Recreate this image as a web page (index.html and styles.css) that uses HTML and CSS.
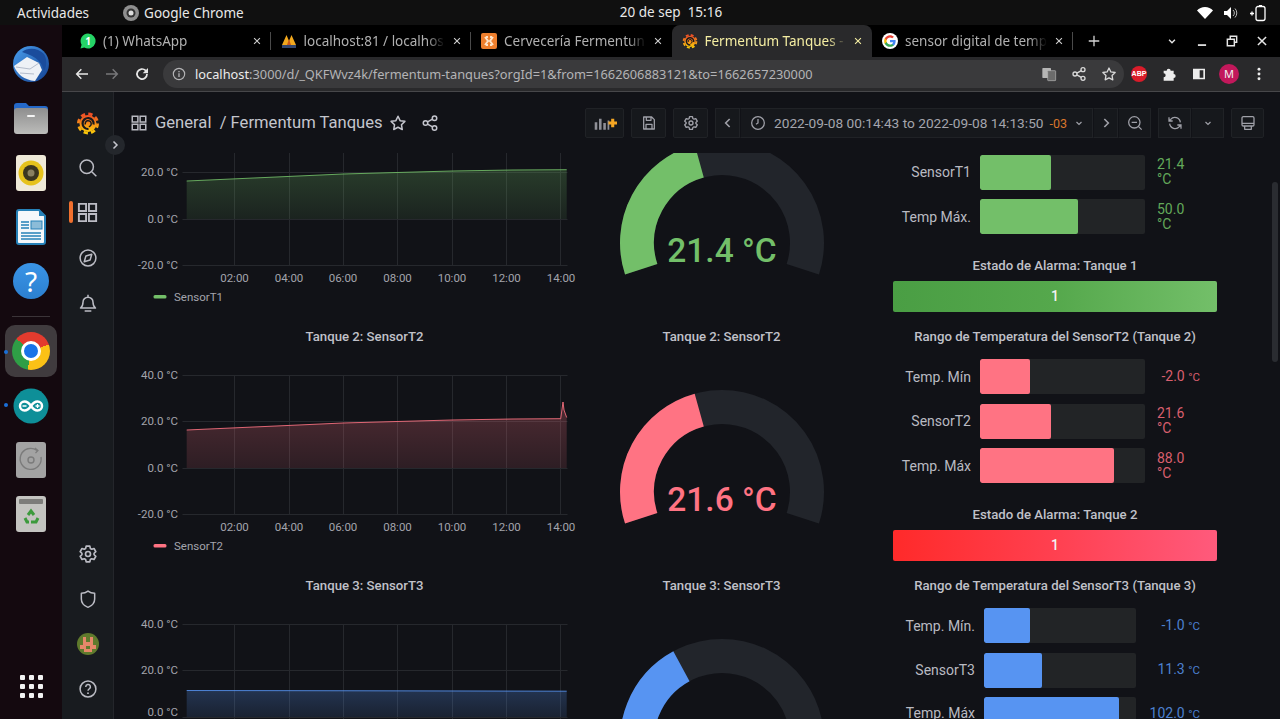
FILE: index.html
```html
<!DOCTYPE html>
<html lang="es">
<head>
  <meta charset="UTF-8" />
  <title>Fermentum Tanques - Grafana</title>
  <link rel="stylesheet" href="styles.css">
</head>
<body>

  <svg class="sprite" xmlns="http://www.w3.org/2000/svg">
    <defs>
      <linearGradient id="grafanaGrad" x1="0" y1="1" x2="0" y2="0">
        <stop offset="0" stop-color="#fbca0a"/>
        <stop offset="1" stop-color="#ef4d27"/>
      </linearGradient>
      <symbol id="grafana" viewBox="0 0 24 24">
        <circle cx="12" cy="12.500" r="8.500" fill="url(#grafanaGrad)"/>
        <circle cx="12" cy="12.500" r="9.600" fill="none" stroke="url(#grafanaGrad)" stroke-width="2.800" stroke-dasharray="4.300 3.240" stroke-linejoin="round"/>
        <path d="M17.500 13.500a5.500 5.500 0 1 0-5 4.500" fill="none" stroke="#17191d" stroke-width="2.200"/>
        <path d="M9.300 13.500a3 3 0 1 1 3.500 2.200" fill="none" stroke="#17191d" stroke-width="1.500"/>
      </symbol>
      <symbol id="gridIcon" viewBox="0 0 24 24">
        <path fill="none" stroke="currentColor" stroke-width="2" d="M3 3h7.500v7.500H3zM13.500 3H21v7.500h-7.500zM3 13.500h7.500V21H3zM13.500 13.500H21V21h-7.500z"/>
      </symbol>
      <symbol id="starIcon" viewBox="0 0 24 24">
        <path fill="none" stroke="currentColor" stroke-width="2" stroke-linejoin="round" d="M12 3l2.800 5.900 6.400.9-4.600 4.500 1.100 6.400L12 17.700l-5.700 3 1.100-6.400-4.600-4.500 6.400-.9z"/>
      </symbol>
      <symbol id="shareIcon" viewBox="0 0 24 24">
        <g fill="none" stroke="currentColor" stroke-width="2">
          <circle cx="18" cy="5.500" r="3"/><circle cx="6" cy="12" r="3"/><circle cx="18" cy="18.500" r="3"/>
          <path d="M8.700 10.600l6.700-3.700M8.700 13.400l6.700 3.700"/>
        </g>
      </symbol>
      <symbol id="gearIcon" viewBox="0 0 24 24">
        <g fill="none" stroke="currentColor" stroke-width="2" stroke-linejoin="round">
          <circle cx="12" cy="12" r="3"/>
          <path d="M9.800 2.500h4.400l.6 2.800 1.700 1 2.700-.9 2.200 3.800-2.100 1.900v1.800l2.100 1.900-2.200 3.800-2.700-.9-1.700 1-.6 2.800H9.800l-.6-2.800-1.700-1-2.700.9-2.200-3.800 2.100-1.900v-1.800L2.600 9.200l2.200-3.800 2.700.9 1.700-1z"/>
        </g>
      </symbol>
      <symbol id="chevronDown" viewBox="0 0 24 24">
        <path fill="none" stroke="currentColor" stroke-width="2.400" d="M7 10l5 5 5-5"/>
      </symbol>
      <symbol id="closeIcon" viewBox="0 0 24 24">
        <path fill="none" stroke="currentColor" stroke-width="2.600" d="M5 5l14 14M19 5L5 19"/>
      </symbol>
    </defs>
  </svg>

  <header class="topbar">
    <span class="topbar-activities">Actividades</span>
    <span class="topbar-app">
      <svg width="16" height="16" viewBox="0 0 16 16"><circle cx="8" cy="8" r="8" fill="#8f8f8f"/><circle cx="8" cy="8" r="4.500" fill="#333"/><circle cx="8" cy="8" r="2.500" fill="#ddd"/></svg>
      Google Chrome
    </span>
    <span class="topbar-clock">20 de sep&nbsp; 15:16</span>
    <span class="topbar-tray">
      <svg width="16" height="14" viewBox="0 0 16 14"><path fill="#fff" d="M8 13L0 4.500C2 2.300 4.800 1 8 1s6 1.300 8 3.500z"/></svg>
      <svg width="16" height="14" viewBox="0 0 16 14"><path fill="#fff" d="M1 5h3l4-4v12L4 9H1z"/><path fill="none" stroke="#bbb" d="M10 4a4 4 0 0 1 0 6M12 2.500a6.500 6.500 0 0 1 0 9"/></svg>
      <svg width="18" height="18" viewBox="0 0 18 18"><rect x="7" y="2.500" width="9" height="14" rx="2" fill="none" stroke="#fff" stroke-width="1.300"/><rect x="10" y="1" width="3" height="1.500" fill="#fff"/><path fill="none" stroke="#fff" stroke-width="1.300" d="M1 9.500h4M3 7.500v4"/></svg>
    </span>
  </header>

  <div class="desktop">

    <nav class="dock">
      <div class="dock-item">
        <svg width="38" height="40" viewBox="0 0 38 40">
          <defs><linearGradient id="birdGrad" x1="0" y1="0" x2="1" y2="1"><stop offset="0" stop-color="#4aa0f0"/><stop offset="1" stop-color="#123f8f"/></linearGradient></defs>
          <circle cx="19" cy="20" r="18" fill="url(#birdGrad)"/>
          <path d="M10 8c6-5 16-4 22 2 3 5 3 12 0 17-1-7-6-14-22-19z" fill="#1a4c9c"/>
          <path d="M2 22l13-9 12 6 3 7-7 11C12 36 5 30 2 22z" fill="#eef1f6"/>
          <path d="M4 23l14 2 9-6M8 29l14 1" fill="none" stroke="#b4bccb"/>
        </svg>
      </div>
      <div class="dock-item">
        <svg width="36" height="34" viewBox="0 0 36 34">
          <defs><linearGradient id="folderGrad" x1="0" y1="0" x2="0" y2="1"><stop offset="0" stop-color="#8e8e8e"/><stop offset="1" stop-color="#bcbcba"/></linearGradient></defs>
          <path d="M1 5a3 3 0 0 1 3-3h9l3 3h16a3 3 0 0 1 3 3v6H1z" fill="#2468c8"/>
          <rect x="1" y="7" width="34" height="26" rx="3" fill="url(#folderGrad)"/>
          <rect x="14" y="14" width="8" height="2" rx="1" fill="#f4f4f4"/>
        </svg>
      </div>
      <div class="dock-item">
        <svg width="30" height="36" viewBox="0 0 30 36">
          <rect width="30" height="36" rx="3" fill="#efe9d8"/>
          <circle cx="15" cy="18" r="12.500" fill="#e6c21c"/>
          <circle cx="15" cy="18" r="8" fill="#3b3520"/>
          <circle cx="15" cy="18" r="3.500" fill="#8a8060"/>
        </svg>
      </div>
      <div class="dock-item">
        <svg width="30" height="36" viewBox="0 0 30 36">
          <path d="M1 3a2 2 0 0 1 2-2h20l6 6v26a2 2 0 0 1-2 2H3a2 2 0 0 1-2-2z" fill="#f5f8fb" stroke="#2681b8" stroke-width="2"/>
          <path d="M23 1l6 6h-6z" fill="#2681b8"/>
          <path d="M5 13h8M5 16h8M5 19h8M5 24h20M5 27h20M5 30h20" stroke="#2681b8" stroke-width="1.600"/>
          <rect x="15" y="12" width="11" height="8" fill="#8bbcd8" stroke="#2681b8"/>
        </svg>
      </div>
      <div class="dock-item">
        <span class="help-icon">?</span>
      </div>
      <div class="dock-sep"></div>
      <div class="dock-item dock-item-running dock-item-active">
        <span class="chrome-icon"></span>
      </div>
      <div class="dock-item dock-item-running">
        <svg width="36" height="36" viewBox="0 0 36 36">
          <circle cx="18" cy="18" r="17.500" fill="#0e8f98"/>
          <path fill="none" stroke="#fff" stroke-width="2.500" d="M18 18c-2-3-4-4.500-6.500-4.500a4.500 4.500 0 0 0 0 9c2.500 0 4.500-1.500 6.500-4.500s4-4.500 6.500-4.500a4.500 4.500 0 0 1 0 9c-2.500 0-4.500-1.500-6.500-4.500z"/>
          <path stroke="#fff" stroke-width="1.300" d="M9.500 18h4M22.500 18h4M24.500 16v4"/>
        </svg>
      </div>
      <div class="dock-item">
        <svg width="30" height="36" viewBox="0 0 30 36">
          <rect width="30" height="36" rx="3" fill="#a3a3a3"/>
          <path d="M25 15a10.500 10.500 0 1 1-4-6.500" fill="none" stroke="#7b7b7b" stroke-width="1.400"/>
          <path d="M19 6l3 2.500-2.500 2.500" fill="none" stroke="#7b7b7b" stroke-width="1.200"/>
          <circle cx="15" cy="18" r="3" fill="none" stroke="#7b7b7b" stroke-width="1.400"/>
        </svg>
      </div>
      <div class="dock-item">
        <svg width="30" height="36" viewBox="0 0 30 36">
          <rect width="30" height="36" rx="3" fill="#c4c4c0"/>
          <rect x="3" y="3" width="24" height="5" rx="1" fill="#7d7d7a"/>
          <path fill="none" stroke="#3c9a3c" stroke-width="3" d="M12 19l3-4 3 4M22 22l-2 4h-5M9 22l2 4h2"/>
        </svg>
      </div>
      <div class="dock-apps">
        <i></i><i></i><i></i><i></i><i></i><i></i><i></i><i></i><i></i>
      </div>
    </nav>

    <div class="browser">

      <div class="tabstrip">
        <div class="tab">
          <svg class="favicon" viewBox="0 0 16 16"><path fill="#25d366" d="M8 .500a7.500 7.500 0 0 0-6.400 11.300L.500 15.500l3.800-1A7.500 7.500 0 1 0 8 .500z"/><text x="8" y="11.500" class="wa-count">1</text></svg>
          <span class="tab-title">(1) WhatsApp</span>
          <svg class="tab-close"><use href="#closeIcon"/></svg>
        </div>
        <div class="tab">
          <svg class="favicon" viewBox="0 0 16 16"><path fill="#f2a81d" d="M1 12L5.500 2 8 8l2.500-6L15 12z"/><path fill="#c9561a" d="M6 12l2-6 2 6z"/><rect x="1" y="12" width="14" height="3" fill="#33466e"/></svg>
          <span class="tab-title">localhost:81 / localhos</span>
          <svg class="tab-close"><use href="#closeIcon"/></svg>
        </div>
        <div class="tab tab-before-active">
          <svg class="favicon" viewBox="0 0 16 16"><rect width="16" height="16" rx="2" fill="#ee7f2d"/><path fill="none" stroke="#fde3c8" stroke-width="2" d="M4 4l3 4-3 4M12 4L9 8l3 4M5 4h2M9 4h2M5 12h2M9 12h2"/></svg>
          <span class="tab-title">Cervecería Fermentun</span>
          <svg class="tab-close"><use href="#closeIcon"/></svg>
        </div>
        <div class="tab tab-active">
          <svg class="favicon"><use href="#grafana"/></svg>
          <span class="tab-title">Fermentum Tanques - </span>
          <svg class="tab-close"><use href="#closeIcon"/></svg>
        </div>
        <div class="tab">
          <svg class="favicon" viewBox="0 0 24 24">
            <circle cx="12" cy="12" r="12" fill="#fff"/>
            <g transform="translate(2.400 2.400) scale(.8)">
              <path fill="#4285F4" d="M22.560 12.250c0-.78-.07-1.530-.2-2.250H12v4.260h5.920c-.26 1.370-1.040 2.530-2.210 3.310v2.770h3.570c2.080-1.920 3.280-4.740 3.280-8.090z"/>
              <path fill="#34A853" d="M12 23c2.970 0 5.460-.98 7.280-2.660l-3.570-2.770c-.98.660-2.230 1.060-3.710 1.060-2.860 0-5.290-1.930-6.160-4.530H2.180v2.840C3.990 20.530 7.700 23 12 23z"/>
              <path fill="#FBBC05" d="M5.840 14.090c-.22-.66-.35-1.360-.35-2.090s.13-1.430.35-2.090V7.070H2.180C1.430 8.550 1 10.220 1 12s.43 3.450 1.180 4.930l3.660-2.840z"/>
              <path fill="#EA4335" d="M12 5.380c1.620 0 3.060.56 4.210 1.640l3.150-3.150C17.450 2.090 14.970 1 12 1 7.700 1 3.990 3.470 2.180 7.070l3.660 2.840c.87-2.600 3.300-4.530 6.160-4.530z"/>
            </g>
          </svg>
          <span class="tab-title">sensor digital de temp</span>
          <svg class="tab-close"><use href="#closeIcon"/></svg>
        </div>
        <svg class="new-tab" viewBox="0 0 24 24"><path fill="none" stroke="currentColor" stroke-width="2.200" d="M12 3v18M3 12h18"/></svg>
        <div class="window-btns">
          <svg viewBox="0 0 24 24"><use href="#chevronDown"/></svg>
          <svg viewBox="0 0 24 24"><path stroke="currentColor" stroke-width="3" d="M5 19h14"/></svg>
          <svg viewBox="0 0 24 24"><path fill="none" stroke="currentColor" stroke-width="2.500" d="M9 8V4h11v10h-4M4 9h12v11H4z"/></svg>
          <svg viewBox="0 0 24 24"><use href="#closeIcon"/></svg>
        </div>
      </div>

      <div class="toolbar">
        <button class="tool-btn">
          <svg viewBox="0 0 24 24"><path fill="none" stroke="currentColor" stroke-width="2.200" d="M21 12H4M11 5l-7 7 7 7"/></svg>
        </button>
        <button class="tool-btn tool-btn-off">
          <svg viewBox="0 0 24 24"><path fill="none" stroke="currentColor" stroke-width="2.200" d="M3 12h17M13 5l7 7-7 7"/></svg>
        </button>
        <button class="tool-btn">
          <svg viewBox="0 0 24 24"><path fill="none" stroke="currentColor" stroke-width="2.600" d="M19.500 12a7.500 7.500 0 1 1-2.200-5.300L19.500 9"/><path fill="currentColor" d="M21 3v8h-8z"/></svg>
        </button>
        <div class="urlbar">
          <svg class="url-info" viewBox="0 0 16 16"><circle cx="8" cy="8" r="6.500" fill="none" stroke="currentColor" stroke-width="1.300"/><path stroke="currentColor" stroke-width="1.500" d="M8 7v4.500M8 4.500V6"/></svg>
          <span class="url-text"><b>localhost</b>:3000/d/_QKFWvz4k/fermentum-tanques?orgId=1&amp;from=1662606883121&amp;to=1662657230000</span>
          <div class="url-actions">
            <svg viewBox="0 0 24 24"><rect x="2" y="3" width="13" height="15" rx="1" fill="#b5b5b5"/><rect x="10" y="7" width="12" height="15" rx="1" fill="#6c6c6c" stroke="#b5b5b5"/></svg>
            <svg viewBox="0 0 24 24"><use href="#shareIcon"/></svg>
            <svg viewBox="0 0 24 24"><use href="#starIcon"/></svg>
          </div>
        </div>
        <div class="tool-ext">
          <span class="ext-abp">ABP</span>
          <svg viewBox="0 0 24 24"><path fill="currentColor" d="M4 7h4.500a3 3 0 1 1 6 0H19v5a3 3 0 1 1 0 6v4H4v-5a3 3 0 1 0 0-6z"/></svg>
          <svg viewBox="0 0 24 24"><path fill="currentColor" fill-rule="evenodd" d="M3 4h18v16H3zM13 6.500v11h5.500v-11z"/></svg>
          <span class="ext-avatar">M</span>
          <svg viewBox="0 0 24 24"><g fill="currentColor"><circle cx="12" cy="5" r="2.200"/><circle cx="12" cy="12" r="2.200"/><circle cx="12" cy="19" r="2.200"/></g></svg>
        </div>
      </div>

      <div class="grafana">

        <aside class="sidemenu">
          <svg class="side-logo"><use href="#grafana"/></svg>
          <span class="side-icon">
            <svg viewBox="0 0 24 24"><circle cx="10.500" cy="10.500" r="8" fill="none" stroke="currentColor" stroke-width="1.800"/><path stroke="currentColor" stroke-width="1.800" d="M16.500 16.500l5.500 5.500"/></svg>
          </span>
          <span class="side-icon side-icon-active">
            <svg class="side-grid" viewBox="0 0 24 24"><use href="#gridIcon"/></svg>
          </span>
          <span class="side-icon">
            <svg viewBox="0 0 24 24"><circle cx="12" cy="12" r="9.500" fill="none" stroke="currentColor" stroke-width="1.800"/><path fill="none" stroke="currentColor" stroke-width="1.800" stroke-linejoin="round" d="M16.500 7.500l-2 7-7 2 2-7z"/></svg>
          </span>
          <span class="side-icon">
            <svg viewBox="0 0 24 24"><path fill="none" stroke="currentColor" stroke-width="1.800" stroke-linejoin="round" d="M12 2v2.500M6 11a6 6 0 0 1 12 0c0 4 1 5.500 3 7H3c2-1.500 3-3 3-7zM8 21.500h8"/></svg>
          </span>
          <span class="side-spacer"></span>
          <span class="side-icon">
            <svg viewBox="0 0 24 24"><use href="#gearIcon"/></svg>
          </span>
          <span class="side-icon">
            <svg viewBox="0 0 24 24"><path fill="none" stroke="currentColor" stroke-width="1.800" stroke-linejoin="round" d="M4 5c3 0 6-1 8-2.500C14 4 17 5 20 5v7c0 5-4 8.500-8 10-4-1.500-8-5-8-10z"/></svg>
          </span>
          <span class="side-icon">
            <svg class="side-avatar" viewBox="0 0 24 24"><circle cx="12" cy="12" r="11" fill="#5f7a2c"/><path fill="#e5886a" d="M7 5h3v5h4V5h3v8h3v4h-4v3H8v-3H4v-4h3z"/><rect x="10" y="14" width="4" height="3" fill="#5f7a2c"/></svg>
          </span>
          <span class="side-icon">
            <svg viewBox="0 0 24 24"><circle cx="12" cy="12" r="9.500" fill="none" stroke="currentColor" stroke-width="1.800"/><path fill="none" stroke="currentColor" stroke-width="1.800" d="M9.300 9.500a2.800 2.800 0 1 1 4.200 2.400c-1 .6-1.500 1.200-1.500 2.300"/><circle cx="12" cy="17" r="1.100" fill="currentColor"/></svg>
          </span>
        </aside>

        <span class="side-toggle">
          <svg viewBox="0 0 24 24"><path fill="none" stroke="currentColor" stroke-width="3" d="M9 5l7 7-7 7"/></svg>
        </span>

        <main class="dashboard">
          <div class="dash-nav">
            <svg class="dash-grid"><use href="#gridIcon"/></svg>
            <span class="dash-title">General&nbsp; / Fermentum Tanques</span>
            <svg class="dash-link dash-star"><use href="#starIcon"/></svg>
            <svg class="dash-link dash-share"><use href="#shareIcon"/></svg>

            <div class="dash-tools">
              <button class="nav-btn nav-btn-add">
                <svg viewBox="0 0 28 20"><path fill="#8e8f96" d="M2 9h3v9H2zM7 5h3v13H7zM12 10h3v8h-3zM17 7h2v11h-2z"/><path fill="none" stroke="#f5a623" stroke-width="3.600" d="M23 5v10M18 10h10"/></svg>
              </button>
              <button class="nav-btn nav-btn-save">
                <svg viewBox="0 0 24 24"><path fill="none" stroke="currentColor" stroke-width="1.900" stroke-linejoin="round" d="M4 3h12l4 4v14H4zM8 3v5h7V3M7.500 21v-7h9v7"/></svg>
              </button>
              <button class="nav-btn nav-btn-gear">
                <svg viewBox="0 0 24 24"><use href="#gearIcon"/></svg>
              </button>
              <div class="nav-group">
                <button class="nav-btn nav-btn-arrow">
                  <svg viewBox="0 0 24 24"><path fill="none" stroke="currentColor" stroke-width="2.400" d="M14.500 6l-6 6 6 6"/></svg>
                </button>
                <button class="nav-btn nav-btn-range">
                  <svg viewBox="0 0 24 24"><circle cx="12" cy="12" r="9.500" fill="none" stroke="currentColor" stroke-width="1.900"/><path fill="none" stroke="currentColor" stroke-width="1.900" d="M12 6v6l-3 2"/></svg>
                  <span>2022-09-08 00:14:43 to 2022-09-08 14:13:50</span>
                  <em>-03</em>
                  <svg class="range-caret"><use href="#chevronDown"/></svg>
                </button>
                <button class="nav-btn nav-btn-arrow">
                  <svg viewBox="0 0 24 24"><path fill="none" stroke="currentColor" stroke-width="2.400" d="M9.500 6l6 6-6 6"/></svg>
                </button>
                <button class="nav-btn nav-btn-zoom">
                  <svg viewBox="0 0 24 24"><circle cx="11" cy="11" r="8.500" fill="none" stroke="currentColor" stroke-width="1.900"/><path stroke="currentColor" stroke-width="1.900" d="M17 17l5 5M7 11h8"/></svg>
                </button>
              </div>
              <div class="nav-group">
                <button class="nav-btn nav-btn-zoom">
                  <svg viewBox="0 0 24 24"><path fill="none" stroke="currentColor" stroke-width="1.900" d="M20 11a8.300 8.300 0 0 0-14.500-4.500L3 9M4 13a8.300 8.300 0 0 0 14.500 4.500L21 15M3 3.500V9h5.500M21 20.500V15h-5.500"/></svg>
                </button>
                <button class="nav-btn nav-btn-caret">
                  <svg><use href="#chevronDown"/></svg>
                </button>
              </div>
              <button class="nav-btn nav-btn-tv">
                <svg viewBox="0 0 24 24"><path fill="none" stroke="currentColor" stroke-width="1.900" stroke-linejoin="round" d="M5 2.500h14a2 2 0 0 1 2 2v10a2 2 0 0 1-2 2H5a2 2 0 0 1-2-2v-10a2 2 0 0 1 2-2zM3 12.500h18M7 21.500h10v-5H7z"/></svg>
              </button>
            </div>
          </div>

          <div class="scroll-view">
            <div class="panels">

              <!-- Tanque 1: the page is scrolled, so its titles and top row sit above the fold -->
              <section class="panel">
                <div class="panel-title"></div>
                <svg class="chart" width="458" height="225">
                  <defs>
                    <linearGradient id="fillGreen" x1="0" y1="0" x2="0" y2="1"><stop offset="0" stop-color="#73bf69" stop-opacity=".24"/><stop offset="1" stop-color="#73bf69" stop-opacity=".1"/></linearGradient>
                    <linearGradient id="fillRed" x1="0" y1="0" x2="0" y2="1"><stop offset="0" stop-color="#ff7383" stop-opacity=".26"/><stop offset="1" stop-color="#ff7383" stop-opacity=".12"/></linearGradient>
                    <linearGradient id="fillBlue" x1="0" y1="0" x2="0" y2="1"><stop offset="0" stop-color="#5794f2" stop-opacity=".26"/><stop offset="1" stop-color="#5794f2" stop-opacity=".12"/></linearGradient>
                    <g id="chartGrid" class="grid-lines">
                      <path d="M60.500 26.500h385M60.500 72.500h385M60.500 119.500h385M60.500 165.500h385"/>
                      <path d="M112.500 26v140M167.500 26v140M221.500 26v140M275.500 26v140M330.500 26v140M384.500 26v140M438.500 26v140"/>
                    </g>
                    <g id="chartTimes" class="axis-x">
                      <text x="112.500" y="182">02:00</text><text x="167" y="182">04:00</text><text x="221" y="182">06:00</text>
                      <text x="275.500" y="182">08:00</text><text x="330" y="182">10:00</text><text x="384.500" y="182">12:00</text><text x="439" y="182">14:00</text>
                    </g>
                  </defs>
                  <use href="#chartGrid"/>
                  <g class="axis-y"><text x="56" y="76">20.0 °C</text><text x="56" y="123">0.0 °C</text><text x="56" y="169">-20.0 °C</text></g>
                  <path class="area" fill="url(#fillGreen)" d="M64.700 81L143 77.500 221 74 275 72.500 330 71 390 70 444.700 69.700V119H64.700z"/>
                  <path class="line" stroke="#73bf69" d="M64.700 81L143 77.500 221 74 275 72.500 330 71 390 70 444.700 69.700"/>
                  <use href="#chartTimes"/>
                  <rect x="31.500" y="195" width="13" height="3.500" rx="1.500" fill="#73bf69"/>
                  <text class="legend" x="52" y="201">SensorT1</text>
                </svg>
              </section>
              <section class="panel">
                <div class="panel-title"></div>
                <div class="gauge">
                  <svg width="208" height="208" viewBox="0 0 208 208">
                    <path class="gauge-track" pathLength="100" d="M23.200 130.300A85 85 0 1 1 184.800 130.300"/>
                    <path class="gauge-value" stroke="#73bf69" pathLength="100" stroke-dasharray="42.800 100" d="M23.200 130.300A85 85 0 1 1 184.800 130.300"/>
                    <text class="gauge-text" x="104" y="123" fill="#73bf69">21.4 °C</text>
                  </svg>
                </div>
              </section>
              <section class="panel panel-bars">
                <div class="panel-title"></div>
                <div class="bars">
                  <div class="bar-row"></div>
                  <div class="bar-row bar-green"><span class="bar-label">SensorT1</span><div class="bar-track"><div class="bar-fill" style="width:43%"></div></div><span class="bar-value">21.4 °C</span></div>
                  <div class="bar-row bar-green"><span class="bar-label">Temp Máx.</span><div class="bar-track"><div class="bar-fill" style="width:59.4%"></div></div><span class="bar-value">50.0 °C</span></div>
                </div>
                <h2 class="panel-title panel-title-alarm">Estado de Alarma: Tanque 1</h2>
                <div class="alarm alarm-green">1</div>
              </section>

              <!-- Tanque 2 -->
              <section class="panel">
                <h2 class="panel-title panel-title-chart">Tanque 2: SensorT2</h2>
                <svg class="chart" width="458" height="225">
                  <use href="#chartGrid"/>
                  <g class="axis-y"><text x="56" y="30">40.0 °C</text><text x="56" y="76">20.0 °C</text><text x="56" y="123">0.0 °C</text><text x="56" y="169">-20.0 °C</text></g>
                  <path class="area" fill="url(#fillRed)" d="M64.700 81L143 77.500 221 74 275 72.500 330 71 390 70 438.700 69.700 441 53 442 61 444.700 68.500V119H64.700z"/>
                  <path class="line" stroke="#ff7383" d="M64.700 81L143 77.500 221 74 275 72.500 330 71 390 70 438.700 69.700 441 53 442 61 444.700 68.500"/>
                  <use href="#chartTimes"/>
                  <rect x="31.500" y="195" width="13" height="3.500" rx="1.500" fill="#ff7383"/>
                  <text class="legend" x="52" y="201">SensorT2</text>
                </svg>
              </section>
              <section class="panel">
                <h2 class="panel-title panel-title-gauge">Tanque 2: SensorT2</h2>
                <div class="gauge">
                  <svg width="208" height="208" viewBox="0 0 208 208">
                    <path class="gauge-track" pathLength="100" d="M23.200 130.300A85 85 0 1 1 184.800 130.300"/>
                    <path class="gauge-value" stroke="#ff7383" pathLength="100" stroke-dasharray="42.800 100" d="M23.200 130.300A85 85 0 1 1 184.800 130.300"/>
                    <text class="gauge-text" x="104" y="123" fill="#ff7383">21.6 °C</text>
                  </svg>
                </div>
              </section>
              <section class="panel panel-bars">
                <h2 class="panel-title">Rango de Temperatura del SensorT2 (Tanque 2)</h2>
                <div class="bars">
                  <div class="bar-row bar-red"><span class="bar-label">Temp. Mín</span><div class="bar-track"><div class="bar-fill" style="width:30%"></div></div><span class="bar-value bar-value-line">-2.0 <small>°C</small></span></div>
                  <div class="bar-row bar-red"><span class="bar-label">SensorT2</span><div class="bar-track"><div class="bar-fill" style="width:43%"></div></div><span class="bar-value">21.6 °C</span></div>
                  <div class="bar-row bar-red"><span class="bar-label">Temp. Máx</span><div class="bar-track"><div class="bar-fill" style="width:81%"></div></div><span class="bar-value">88.0 °C</span></div>
                </div>
                <h2 class="panel-title panel-title-alarm">Estado de Alarma: Tanque 2</h2>
                <div class="alarm alarm-red">1</div>
              </section>

              <!-- Tanque 3 -->
              <section class="panel">
                <h2 class="panel-title panel-title-chart">Tanque 3: SensorT3</h2>
                <svg class="chart" width="458" height="225">
                  <use href="#chartGrid"/>
                  <g class="axis-y"><text x="56" y="30">40.0 °C</text><text x="56" y="76">20.0 °C</text><text x="56" y="118">0.0 °C</text></g>
                  <path class="area" fill="url(#fillBlue)" d="M64.700 92.500L250 92.800 444.700 93.200V119H64.700z"/>
                  <path class="line" stroke="#5794f2" d="M64.700 92.500L250 92.800 444.700 93.200"/>
                </svg>
              </section>
              <section class="panel">
                <h2 class="panel-title panel-title-gauge">Tanque 3: SensorT3</h2>
                <div class="gauge">
                  <svg width="208" height="208" viewBox="0 0 208 208">
                    <path class="gauge-track" pathLength="100" d="M23.200 130.300A85 85 0 1 1 184.800 130.300"/>
                    <path class="gauge-value" stroke="#5794f2" pathLength="100" stroke-dasharray="36.800 100" d="M23.200 130.300A85 85 0 1 1 184.800 130.300"/>
                  </svg>
                </div>
              </section>
              <section class="panel panel-bars">
                <h2 class="panel-title">Rango de Temperatura del SensorT3 (Tanque 3)</h2>
                <div class="bars bars-narrow">
                  <div class="bar-row bar-blue"><span class="bar-label">Temp. Mín.</span><div class="bar-track"><div class="bar-fill" style="width:30%"></div></div><span class="bar-value bar-value-line">-1.0 <small>°C</small></span></div>
                  <div class="bar-row bar-blue"><span class="bar-label">SensorT3</span><div class="bar-track"><div class="bar-fill" style="width:38%"></div></div><span class="bar-value bar-value-line">11.3 <small>°C</small></span></div>
                  <div class="bar-row bar-blue bar-row-last"><span class="bar-label">Temp. Máx</span><div class="bar-track"><div class="bar-fill" style="width:89%"></div></div><span class="bar-value bar-value-line">102.0 <small>°C</small></span></div>
                </div>
              </section>

            </div>
            <span class="scroll-thumb"></span>
          </div>
        </main>
      </div>
    </div>
  </div>

</body>
</html>
```

FILE: styles.css
```css
* {
  box-sizing: border-box;
  margin: 0;
  padding: 0;
}

html, body {
  height: 100%;
  overflow: hidden;
}

body {
  background: #111217;
  color: #ccccdc;
  display: flex;
  flex-direction: column;
  font-family: 'Noto Sans', sans-serif;
}

button {
  background: none;
  border: none;
  color: inherit;
  font: inherit;
}

.sprite {
  display: block;
  flex: none;
  height: 0;
  width: 0;
}

/* ---- barra de gnome ---- */
.topbar {
  align-items: center;
  background: #101010;
  color: #e8e8e8;
  display: flex;
  flex: none;
  font-size: 13.5px;
  height: 25px;
  position: relative;
}

.topbar-activities {
  margin-left: 17px;
}

.topbar-app {
  align-items: center;
  display: flex;
  gap: 5px;
  margin-left: 34px;
}

.topbar-clock {
  left: 0;
  padding-left: 62px;
  position: absolute;
  right: 0;
  text-align: center;
  top: 3px;
}

.topbar-tray {
  align-items: center;
  display: flex;
  gap: 10px;
  margin-left: auto;
  margin-right: 13px;
}

/* ---- dock ---- */
.desktop {
  display: flex;
  flex: 1;
  min-height: 0;
}

.dock {
  align-items: center;
  background: #14090f;
  display: flex;
  flex: none;
  flex-direction: column;
  padding: 12px 0 21px;
  width: 62px;
}

.dock-item {
  align-items: center;
  border-radius: 10px;
  display: flex;
  flex: none;
  height: 54.3px;
  justify-content: center;
  position: relative;
  width: 52px;
}

.dock-item-running::before {
  background: #1a6fd8;
  border-radius: 50%;
  content: '';
  height: 4px;
  left: -1px;
  position: absolute;
  top: 25px;
  width: 4px;
}

.dock-item-active {
  background: #403b3e;
  height: 52px;
  margin: 1px 0;
}

.help-icon {
  background: linear-gradient(#3a94e6, #2c80d0);
  border-radius: 50%;
  color: #fff;
  display: block;
  font-size: 28px;
  height: 36px;
  line-height: 36px;
  text-align: center;
  width: 36px;
}

.dock-sep {
  background: #3b3438;
  flex: none;
  height: 1px;
  margin: 8px 0 7px;
  width: 38px;
}

.chrome-icon {
  background: conic-gradient(from -50deg, #e33b2e 0 120deg, #fbc116 120deg 240deg, #2f9e46 240deg 360deg);
  border-radius: 50%;
  display: block;
  height: 38px;
  position: relative;
  width: 38px;
}

.chrome-icon::after {
  background: #1a73e8;
  border: 3px solid #fff;
  border-radius: 50%;
  content: '';
  inset: 9px;
  position: absolute;
}

.dock-apps {
  display: grid;
  gap: 4px;
  grid-template-columns: repeat(3, 5px);
  margin-top: auto;
}

.dock-apps i {
  background: #f2f2f2;
  border-radius: 1px;
  height: 5px;
  width: 5px;
}

/* ---- chrome ---- */
.browser {
  display: flex;
  flex: 1;
  flex-direction: column;
  min-width: 0;
}

.tabstrip {
  align-items: stretch;
  background: #000;
  display: flex;
  flex: none;
  height: 32px;
  padding-left: 8px;
}

.tab {
  align-items: center;
  color: #b0b0b0;
  display: flex;
  flex: none;
  font-size: 13.5px;
  gap: 7px;
  padding: 0 9px 0 10px;
  position: relative;
  width: 200.5px;
}

.tab::after {
  background: #4a4a4a;
  content: '';
  height: 18px;
  position: absolute;
  right: 0;
  top: 7px;
  width: 1px;
}

.tab-before-active::after,
.tab-active::after {
  display: none;
}

.tab-active {
  background: #29292b;
  border-radius: 8px 8px 0 0;
  color: #f4eda2;
}

.favicon {
  flex: none;
  height: 16px;
  width: 16px;
}

.wa-count {
  fill: #fff;
  font-size: 10px;
  font-weight: 700;
  text-anchor: middle;
}

.tab-title {
  flex: 1;
  mask-image: linear-gradient(to left, transparent 0, #000 18px);
  min-width: 0;
  overflow: hidden;
  white-space: pre;
}

.tab-close {
  color: #cfcfcf;
  flex: none;
  height: 10px;
  width: 10px;
}

.tab-active .tab-close {
  color: #f4eda2;
}

.new-tab {
  align-self: center;
  color: #d5d5d5;
  height: 14px;
  margin-left: 14px;
  width: 14px;
}

.window-btns {
  align-items: center;
  color: #e6e6e6;
  display: flex;
  gap: 16px;
  margin-left: auto;
  padding-right: 11px;
}

.window-btns svg {
  height: 14px;
  width: 14px;
}

.toolbar {
  align-items: center;
  background: #29292b;
  border-bottom: 1px solid #47474a;
  display: flex;
  flex: none;
  height: 35px;
  padding: 0 6px 0 5px;
}

.tool-btn {
  align-items: center;
  color: #e8e8e8;
  display: flex;
  height: 30px;
  justify-content: center;
  width: 30px;
}

.tool-btn svg {
  height: 16px;
  width: 16px;
}

.tool-btn-off {
  color: #77777a;
}

.urlbar {
  align-items: center;
  background: #3a3a3c;
  border-radius: 14px;
  color: #b4b4b6;
  display: flex;
  flex: 1;
  font-size: 12.8px;
  height: 28px;
  margin-left: 6px;
  min-width: 0;
  padding: 0 7px 0 9px;
}

.url-info {
  flex: none;
  height: 14px;
  width: 14px;
}

.url-text {
  margin-left: 9px;
  white-space: nowrap;
}

.url-text b {
  color: #ececec;
  font-weight: 400;
}

.url-actions {
  align-items: center;
  color: #d8d8d8;
  display: flex;
  gap: 14px;
  margin-left: auto;
}

.url-actions svg {
  height: 16px;
  width: 16px;
}

.tool-ext {
  align-items: center;
  color: #ececec;
  display: flex;
  flex: none;
}

.tool-ext > * {
  flex: none;
  margin: 0 7px;
}

.tool-ext svg {
  height: 16px;
  width: 16px;
}

.ext-abp {
  background: #d91c2a;
  border-radius: 50%;
  color: #fff;
  font-family: 'Liberation Sans', sans-serif;
  font-size: 7px;
  font-weight: 700;
  height: 16px;
  line-height: 16px;
  text-align: center;
  width: 16px;
}

.tool-ext .ext-avatar {
  background: #c2185b;
  border-radius: 50%;
  color: #f0f0f0;
  font-size: 11px;
  height: 20px;
  line-height: 20px;
  margin: 0 5px;
  text-align: center;
  width: 20px;
}

/* ---- grafana ---- */
.grafana {
  display: flex;
  flex: 1;
  font-family: Roboto, sans-serif;
  min-height: 0;
  position: relative;
}

.sidemenu {
  align-items: center;
  background: #181b1f;
  border-right: 1px solid #24262b;
  color: #bbbcc4;
  display: flex;
  flex: none;
  flex-direction: column;
  padding: 19px 0 8px;
  width: 52px;
}

.side-logo {
  flex: none;
  height: 24px;
  margin-bottom: 10px;
  width: 24px;
}

.side-icon {
  align-items: center;
  display: flex;
  flex: none;
  height: 45px;
  justify-content: center;
  position: relative;
  width: 100%;
}

.side-icon svg {
  height: 20px;
  width: 20px;
}

.side-icon .side-grid {
  height: 23px;
  width: 23px;
}

.side-icon .side-avatar {
  height: 24px;
  width: 24px;
}

.side-icon-active::before {
  background: #f0702e;
  border-radius: 2px;
  content: '';
  height: 22px;
  left: 7px;
  position: absolute;
  top: 11px;
  width: 4px;
}

.side-spacer {
  flex: 1;
}

.side-toggle {
  align-items: center;
  background: #24272c;
  border-radius: 50%;
  color: #c6c7cf;
  display: flex;
  height: 20px;
  justify-content: center;
  left: 43px;
  position: absolute;
  top: 43px;
  width: 20px;
}

.side-toggle svg {
  height: 12px;
  width: 12px;
}

.dashboard {
  display: flex;
  flex: 1;
  flex-direction: column;
  min-width: 0;
}

.dash-nav {
  align-items: flex-start;
  display: flex;
  flex: none;
  height: 61px;
  padding: 16px 16px 0;
}

.dash-grid {
  color: #b9bac2;
  flex: none;
  height: 18px;
  margin: 6px 7px 0 0;
  width: 18px;
}

.dash-title {
  color: #c4c5cd;
  font-size: 16.6px;
  line-height: 30px;
}

.dash-link {
  color: #c4c5cd;
  height: 18px;
  margin-top: 6px;
  width: 18px;
}

.dash-star {
  margin-left: 6px;
}

.dash-share {
  margin-left: 14px;
}

.dash-tools {
  align-items: center;
  display: flex;
  gap: 7px;
  margin-left: auto;
}

.nav-btn {
  align-items: center;
  background: #16181c;
  border: 1px solid #202226;
  border-radius: 2px;
  color: #a0a1a9;
  display: flex;
  flex: none;
  font-size: 13.7px;
  height: 30px;
  justify-content: center;
  width: 33px;
}

.nav-btn svg {
  height: 16px;
  width: 16px;
}

.nav-btn-add {
  width: 39px;
}

.nav-btn-add svg {
  height: 18px;
  width: 24px;
}

.nav-btn-save {
  width: 35px;
}

.nav-btn-gear {
  width: 35px;
}

.nav-group {
  display: flex;
}

.nav-group .nav-btn {
  border-radius: 0;
}

.nav-group .nav-btn + .nav-btn {
  border-left: 1px solid #111217;
}

.nav-btn-arrow {
  width: 25px;
}

.nav-btn-range {
  gap: 6px;
  justify-content: flex-start;
  padding-left: 9px;
  width: 353px;
}

.nav-btn-range span {
  color: #a4a5ad;
  margin-left: 2px;
  white-space: nowrap;
}

.nav-btn-range em {
  color: #d8762c;
  font-size: 12.5px;
  font-style: normal;
}

.nav-btn-range .range-caret {
  height: 12px;
  margin-left: 0;
  width: 12px;
}

.nav-btn-caret svg {
  height: 12px;
  width: 12px;
}

.scroll-view {
  flex: 1;
  min-height: 0;
  overflow: hidden;
  position: relative;
}

.scroll-thumb {
  background: #2a2c31;
  border-radius: 4px;
  height: 180px;
  position: absolute;
  right: 2px;
  top: 29px;
  width: 6px;
}

.panels {
  display: grid;
  grid-template-columns: 464px 299px 340px;
  grid-auto-rows: 249px;
  margin-top: -77px;
  padding-left: 8px;
}

.panel {
  min-width: 0;
}

.panel-title {
  color: #c0c1c9;
  font-size: 13.2px;
  font-weight: 500;
  height: 24px;
  line-height: 24px;
  text-align: center;
}

.panel-title-gauge {
  padding-right: 28px;
}

.panel-title-chart {
  padding-left: 21px;
}

.chart {
  display: block;
}

.grid-lines path {
  fill: none;
  stroke: #26282d;
  stroke-width: 1;
}

.axis-y text,
.axis-x text,
.legend {
  fill: #a3a4ac;
  font-size: 11.5px;
}

.axis-y text {
  text-anchor: end;
}

.axis-x text {
  text-anchor: middle;
}

.line {
  fill: none;
  opacity: .85;
  stroke-width: 1;
}

.gauge {
  display: flex;
  justify-content: center;
  margin-top: 39px;
  padding-right: 28px;
}

.gauge svg {
  display: block;
}

.gauge-track,
.gauge-value {
  fill: none;
  stroke-width: 34;
}

.gauge-track {
  stroke: #22252b;
}

.gauge-text {
  font-size: 33.5px;
  font-weight: 500;
  text-anchor: middle;
}

.panel-bars {
  padding: 0 8px;
}

.bars {
  display: flex;
  flex-direction: column;
  gap: 9.5px;
  height: 153px;
  margin-left: -8px;
  padding-top: 10px;
}

.bar-row {
  align-items: center;
  display: flex;
  flex: none;
  height: 35px;
}

.bar-label {
  color: #b9bac2;
  flex: none;
  font-size: 14px;
  text-align: right;
  width: 86px;
}

.bar-track {
  background: #222426;
  border-radius: 2px;
  flex: none;
  height: 100%;
  margin-left: 9px;
  overflow: hidden;
  width: 165px;
}

.bar-fill {
  border-radius: 2px;
  height: 100%;
}

.bar-value {
  flex: none;
  font-size: 14px;
  line-height: 15px;
  margin-left: 12px;
  width: 34px;
}

.bar-value-line {
  margin-left: 0;
  text-align: right;
  white-space: nowrap;
  width: 55px;
}

.bar-value small {
  font-size: 11.5px;
}

.bars-narrow .bar-label {
  width: 90px;
}

.bars-narrow .bar-track {
  width: 152px;
}

.bars-narrow .bar-value-line {
  width: 64px;
}

/* last row runs into the bottom of the window, keep its text in view */
.bar-row-last {
  align-items: flex-start;
}

.bar-row-last .bar-label,
.bar-row-last .bar-value {
  line-height: 16px;
  margin-top: 8px;
}

.bar-green .bar-fill { background: #73bf69; }
.bar-green .bar-value { color: #63a95a; }
.bar-red .bar-fill { background: #ff7383; }
.bar-red .bar-value { color: #d95f6e; }
.bar-blue .bar-fill { background: #5794f2; }
.bar-blue .bar-value { color: #4c80d0; }

.panel-title-alarm {
  margin-top: 1px;
}

.alarm {
  border-radius: 2px;
  color: #f2f2f2;
  font-size: 14px;
  font-weight: 500;
  height: 31px;
  line-height: 31px;
  margin-top: 3px;
  text-align: center;
}

.alarm-green {
  background: linear-gradient(to right, #4a9e44, #55a84c 50%, #73bf69);
}

.alarm-red {
  background: linear-gradient(to right, #ff2a2a, #ff4050 50%, #ff5a7c);
}
```
